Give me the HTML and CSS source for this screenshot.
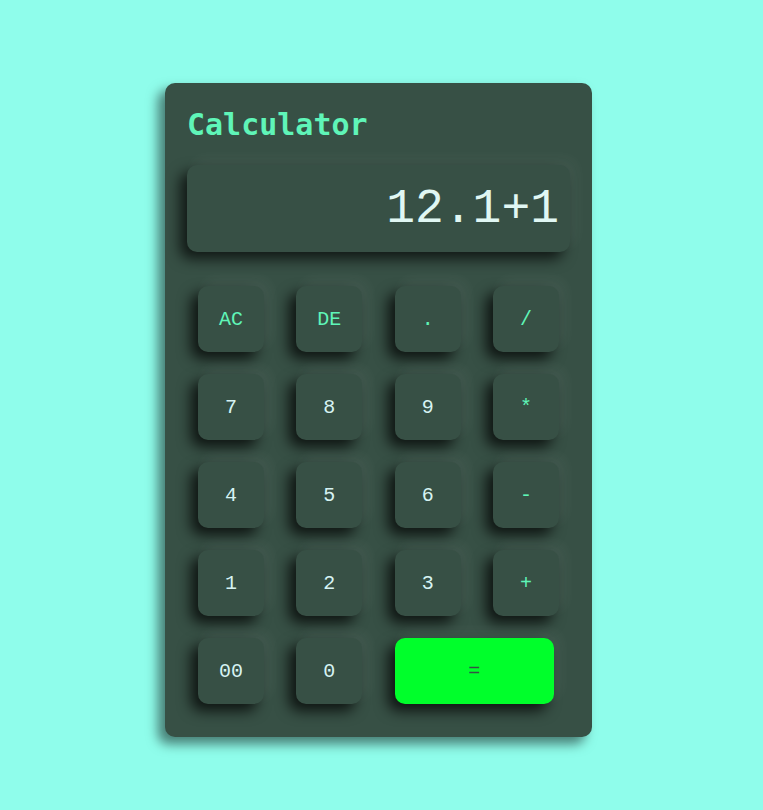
FILE: index.html
```html
<!DOCTYPE html>
<html>
<head>
<meta charset="utf-8">
<link rel="stylesheet" href="styles.css">
</head>
<body>
<div class="page">
  <div class="calc">
    <h1 class="title">Calculator</h1>
    <div class="display">12.1+1</div>
    <div class="keys">
      <button class="key op">AC</button>
      <button class="key op">DE</button>
      <button class="key op">.</button>
      <button class="key op">/</button>
      <button class="key">7</button>
      <button class="key">8</button>
      <button class="key">9</button>
      <button class="key op">*</button>
      <button class="key">4</button>
      <button class="key">5</button>
      <button class="key">6</button>
      <button class="key op">-</button>
      <button class="key">1</button>
      <button class="key">2</button>
      <button class="key">3</button>
      <button class="key op">+</button>
      <button class="key">00</button>
      <button class="key">0</button>
      <button class="key equals">=</button>
    </div>
  </div>
</div>
</body>
</html>
```
FILE: styles.css
```css
html, body {
  margin: 0;
  padding: 0;
  background: #8ffdeb;
}
.page {
  width: 763px;
  height: 810px;
  box-sizing: border-box;
  padding: 83px 0 0 165px;
}
.calc {
  width: 427px;
  height: 654px;
  box-sizing: border-box;
  background: #375045;
  border-radius: 10px;
  padding: 24px 22px 0 22px;
  box-shadow: -7px 7px 12px rgba(0, 0, 0, 0.5);
}
.title {
  margin: 0;
  font-family: "DejaVu Sans Mono", monospace;
  font-weight: bold;
  font-size: 30px;
  line-height: 35px;
  color: #5ff5b8;
}
.display {
  margin-top: 23px;
  height: 87px;
  border-radius: 10px;
  background: #375045;
  box-shadow: -7px 7px 14px rgba(0, 0, 0, 0.7), 6px -6px 14px rgba(255, 255, 255, 0.05);
  display: flex;
  align-items: center;
  justify-content: flex-end;
  padding-right: 11px;
  font-family: "Liberation Mono", monospace;
  font-size: 48px;
  color: #e0f7f3;
}
.keys {
  margin: 34px 0 0 11px;
  width: 361px;
  display: grid;
  grid-template-columns: repeat(4, 66px);
  grid-auto-rows: 66px;
  justify-content: space-between;
  row-gap: 22px;
}
.key {
  border: none;
  padding: 0;
  margin: 0;
  width: 66px;
  height: 66px;
  border-radius: 10px;
  background: #375045;
  box-shadow: -7px 7px 14px rgba(0, 0, 0, 0.75), 6px -6px 14px rgba(255, 255, 255, 0.06);
  font-family: "Liberation Mono", monospace;
  font-size: 20px;
  color: #d6f3f3;
  display: flex;
  align-items: center;
  justify-content: center;
}
.key.op {
  color: #5ff5b8;
}
.key.equals {
  grid-column: span 2;
  width: 159px;
  background: #00ff2b;
  color: #375045;
}
```
